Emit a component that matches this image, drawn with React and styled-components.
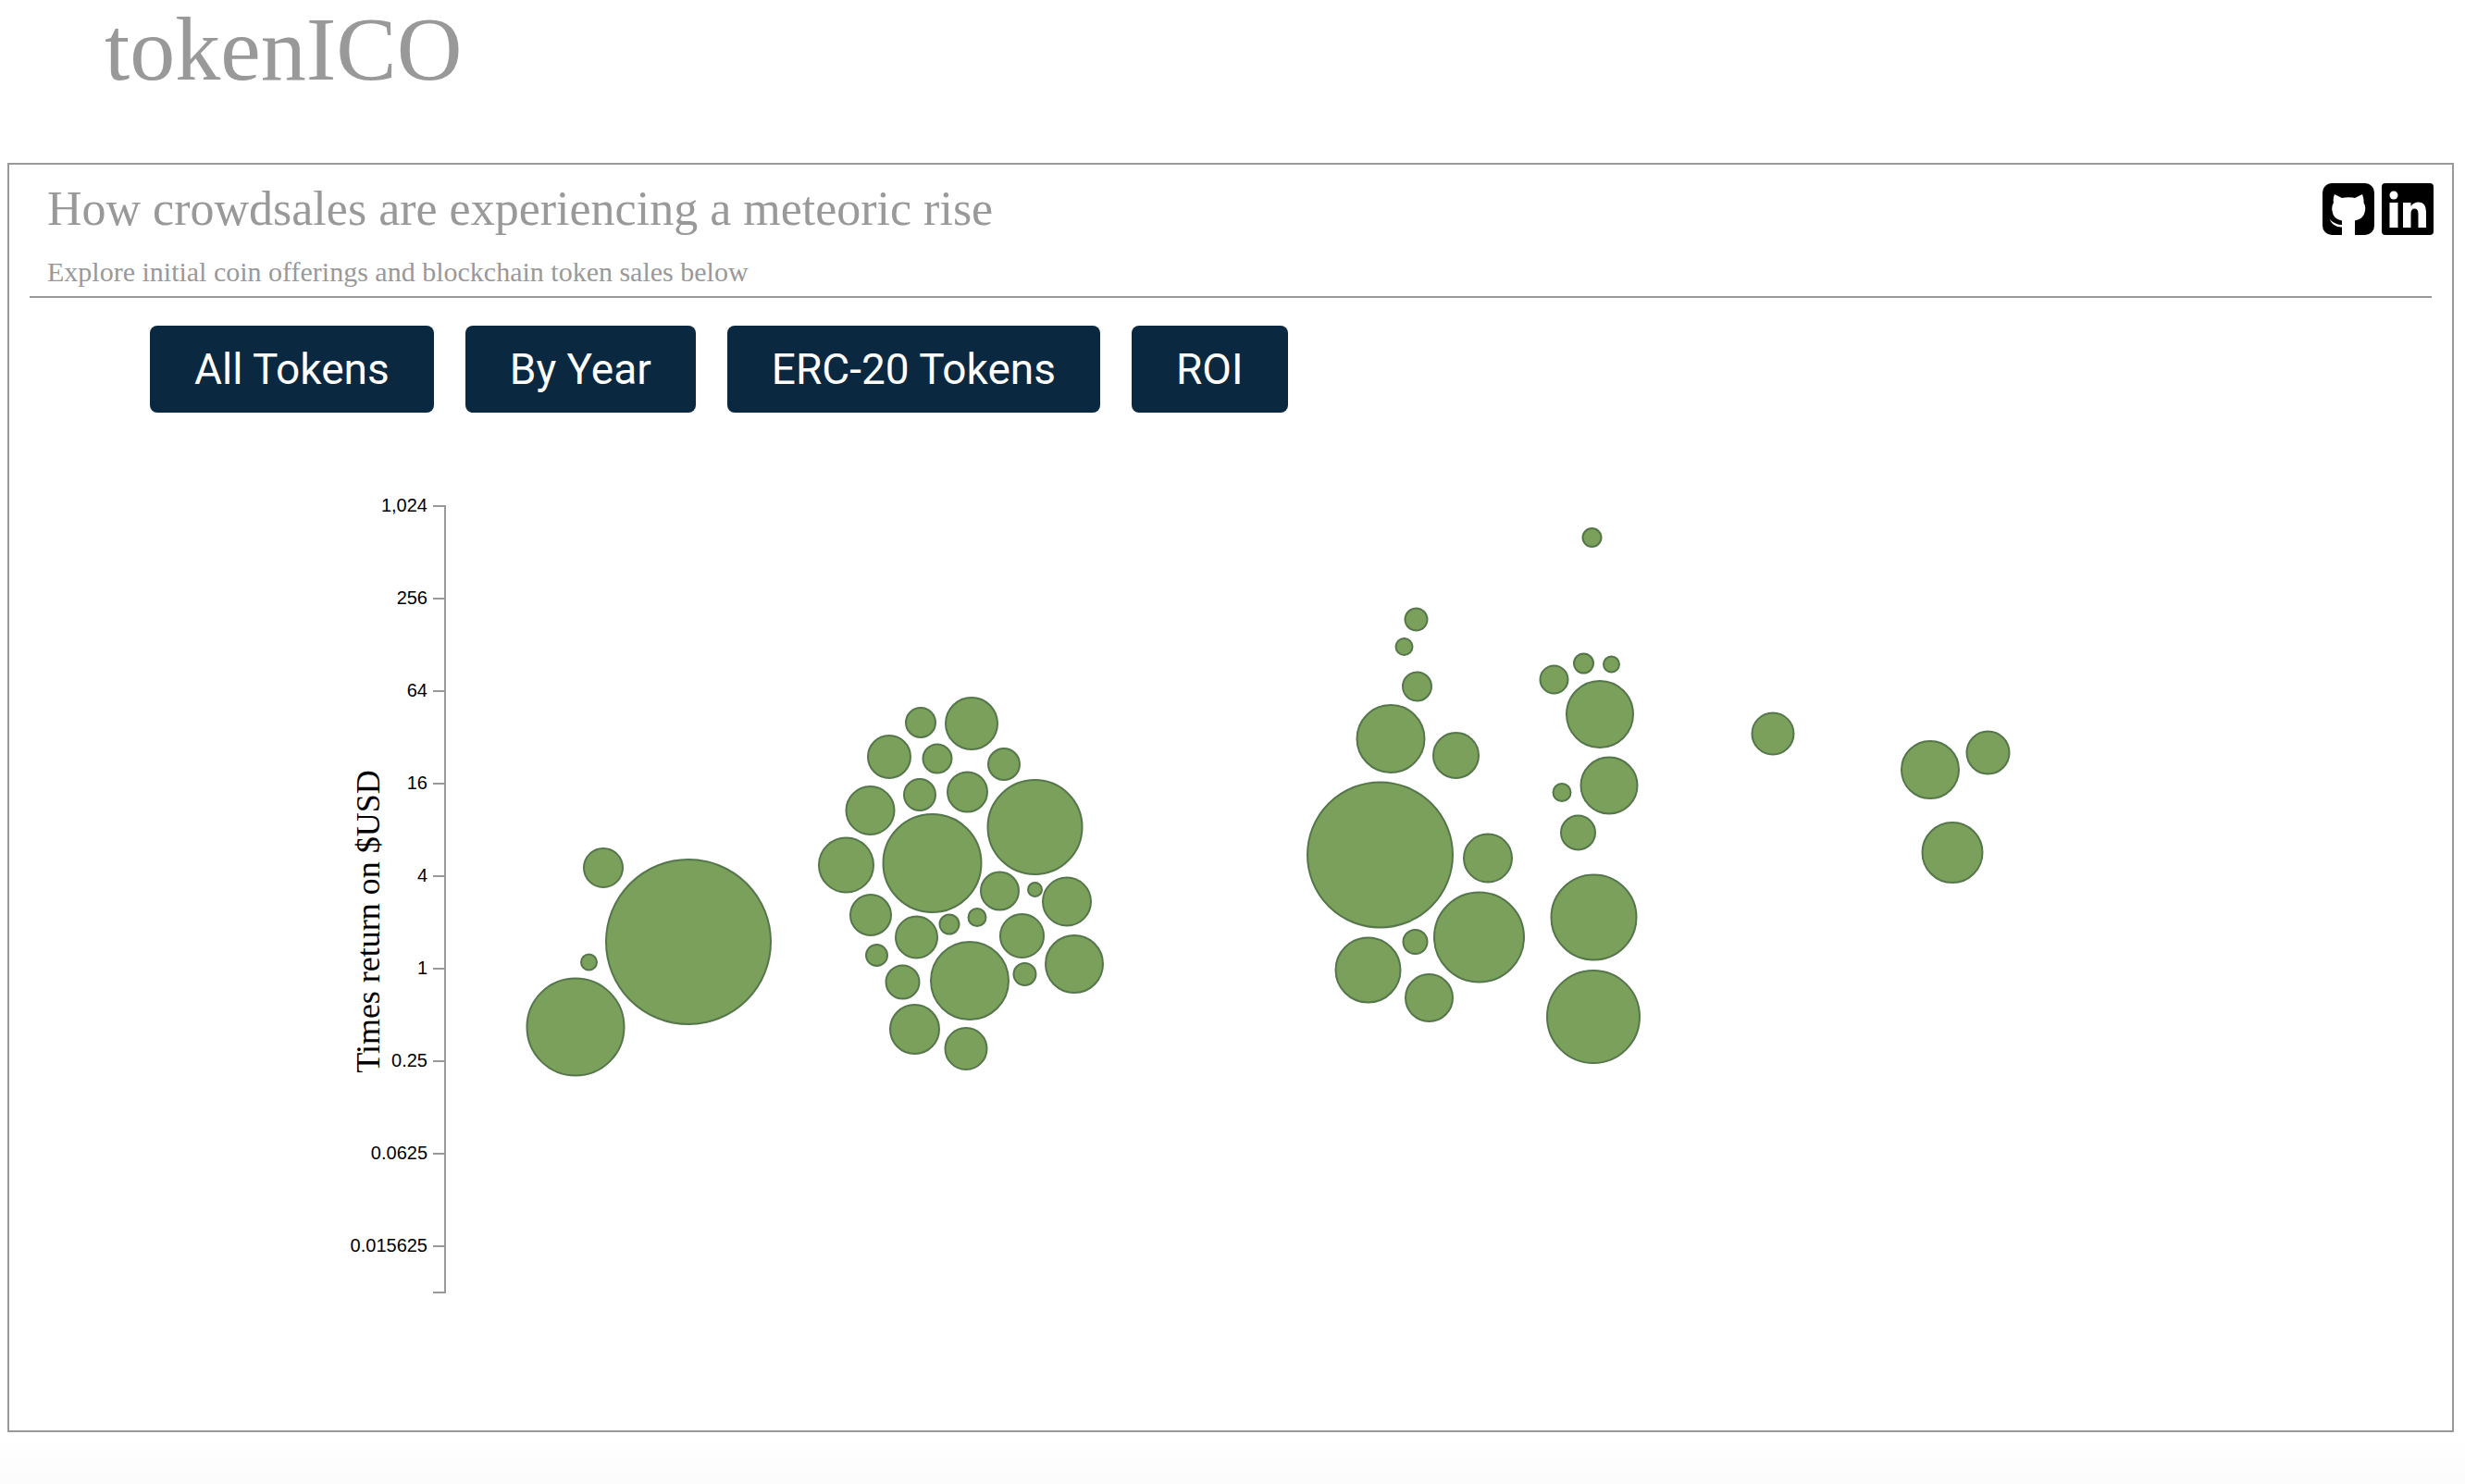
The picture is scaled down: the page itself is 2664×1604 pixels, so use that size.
import React from 'react'
import styled, { createGlobalStyle } from 'styled-components'

const GlobalStyle = createGlobalStyle`
  html, body {
    margin: 0;
    padding: 0;
    background: #fff;
    font-family: 'Liberation Serif', 'Times New Roman', serif;
  }
`

const Page = styled.div`
  width: 2664px;
  height: 1604px;
  overflow: hidden;
  display: flex;
  flex-direction: column;
`

const Brand = styled.h1`
  height: 176px;
  box-sizing: border-box;
  margin: 0;
  padding: 0 0 0 113px;
  font-size: 98px;
  line-height: 106px;
  font-weight: 400;
  color: #999;
`

const Panel = styled.section`
  height: 1372px;
  box-sizing: border-box;
  margin: 0 12px 0 8px;
  border: 2px solid #999;
  display: flex;
  flex-direction: column;
`

const PanelHeader = styled.header`
  height: 144px;
  box-sizing: border-box;
  margin: 0 22px;
  padding: 18px 0 0 19px;
  border-bottom: 2px solid #999;
  display: flex;
  justify-content: space-between;
  align-items: flex-start;
`

const Heading = styled.h2`
  margin: 0;
  font-size: 52px;
  line-height: 60px;
  font-weight: 400;
  color: #999;
`

const Subheading = styled.p`
  margin: 21px 0 0;
  font-size: 30px;
  line-height: 34px;
  color: #999;
`

const Socials = styled.div`
  display: flex;
  gap: 8px;
  margin: 2px -2px 0 0;
`

const Toolbar = styled.nav`
  display: flex;
  gap: 34px;
  margin: 30px 0 0 152px;
`

const Button = styled.button`
  height: 94px;
  padding: 0 48px;
  border: 0;
  border-radius: 8px;
  background: #0a2840;
  color: #fff;
  font-family: Roboto, 'Liberation Sans', Arial, sans-serif;
  font-size: 46px;
`

const Chart = styled.svg`
  display: block;
  position: absolute;
  left: 0;
  top: 0;
  width: 2664px;
  height: 1604px;
  pointer-events: none;

  .tick {
    font-family: 'Liberation Sans', Arial, sans-serif;
    font-size: 20px;
    fill: #000;
    text-anchor: end;
  }
  .axis-title {
    font-family: 'Liberation Serif', 'Times New Roman', serif;
    font-size: 36px;
    fill: #000;
    text-anchor: middle;
  }
  .axis {
    stroke: #999;
    stroke-width: 2;
    fill: none;
  }
  circle {
    fill: #7ba05b;
    stroke: #55764a;
    stroke-width: 2;
  }
`

const Footer = styled.div`
  flex: 1;
  background: linear-gradient(#fff 0%, #fefefe 40%, #fcfcfc 100%);
`

const ticks = ['1,024', '256', '64', '16', '4', '1', '0.25', '0.0625', '0.015625']

// x, y, r measured off the reference
const bubbles = [
  [652, 938, 21], [744, 1018, 89], [636.5, 1040, 8.5], [622, 1110, 52.5],
  [995, 781, 16], [1050, 782, 28], [961, 818, 23], [1013, 820, 15.5],
  [1085, 826, 17], [994, 859, 17], [1045.5, 856, 21.5], [1118.5, 894, 51],
  [940.5, 876, 26], [914.5, 935, 29.5], [1007.5, 933, 53], [1080.5, 963, 20.5],
  [1118.5, 961.5, 7.5], [1153, 974.5, 26], [941, 989, 22], [1026, 999, 10.5],
  [1056, 991.5, 9.5], [990.5, 1013, 22.5], [1104.5, 1011.5, 23.5], [1161, 1042, 31],
  [947.5, 1032.5, 11.5], [1048, 1060, 42], [1107.5, 1053, 12], [975.5, 1061.5, 18],
  [988.5, 1112.5, 26.5], [1044, 1133.5, 22.5],
  [1720.5, 581, 10], [1530.5, 669.5, 12], [1517.5, 699, 9], [1531.5, 742, 15.5],
  [1503, 798.5, 36.5], [1573.5, 816.5, 24.5], [1491.5, 924, 78.5], [1608, 927.5, 26],
  [1598.5, 1013, 48.5], [1529.5, 1018, 13], [1478.5, 1048.5, 35], [1544.5, 1078.5, 25.5],
  [1679.5, 734.5, 15], [1711.5, 717, 10.5], [1741.5, 718, 8.5], [1729, 772, 36],
  [1739, 849, 30.5], [1688, 856.5, 9.5], [1705.5, 900, 18.5], [1722.5, 991.5, 46],
  [1722, 1099, 50], [1916, 793, 22.5], [2086, 832, 31], [2148.5, 813.5, 23],
  [2110, 921.5, 32.5],
]

const GithubIcon = () => (
  <svg width='56' height='56' viewBox='0 0 56 56'>
    <rect width='56' height='56' rx='10' fill='#000' />
    <path
      fill='#fff'
      d='M13 12 L21 16 Q28 14.5 35 16 L43 12 Q45 17 44.5 21 Q47 25 46 30 Q44.5 39 35 40.5 L35 56 L21 56 L21 47.5 Q12 48 7.5 39 Q14 45 21 45 L21 40.5 Q11.5 39 10.5 30 Q9.5 25 12 21 Q11 17 13 12 Z'
    />
  </svg>
)

const LinkedinIcon = () => (
  <svg width='56' height='56' viewBox='0 0 56 56'>
    <rect width='56' height='56' rx='4' fill='#000' />
    <circle cx='13' cy='13' r='4.5' fill='#fff' />
    <path
      fill='#fff'
      d='M8.5 21 H17.5 V48 H8.5 Z M23 21 H31.5 V25 Q34 20.5 40 20.5 Q48 20.5 48 31 V48 H39.5 V33 Q39.5 27.5 35.5 27.5 Q31.5 27.5 31.5 33 V48 H23 Z'
    />
  </svg>
)

const App = () => (
  <Page>
    <GlobalStyle />
    <Brand>tokenICO</Brand>
    <Panel>
      <PanelHeader>
        <div>
          <Heading>How crowdsales are experiencing a meteoric rise</Heading>
          <Subheading>Explore initial coin offerings and blockchain token sales below</Subheading>
        </div>
        <Socials>
          <GithubIcon />
          <LinkedinIcon />
        </Socials>
      </PanelHeader>
      <Toolbar>
        <Button>All Tokens</Button>
        <Button>By Year</Button>
        <Button>ERC-20 Tokens</Button>
        <Button>ROI</Button>
      </Toolbar>
    </Panel>
    <Footer />
    <Chart viewBox='0 0 2664 1604'>
      <path className='axis' d='M468 547 H481 V1397 H468' />
      {ticks.map((label, i) => (
        <g key={label}>
          <line className='axis' x1='468' x2='481' y1={547 + i * 100} y2={547 + i * 100} />
          <text className='tick' x='462' y={553 + i * 100}>{label}</text>
        </g>
      ))}
      <text className='axis-title' transform='translate(410 996) rotate(-90)'>Times return on $USD</text>
      {bubbles.map(([x, y, r]) => (
        <circle key={`${x}-${y}`} cx={x} cy={y} r={r} />
      ))}
    </Chart>
  </Page>
)

export default App
